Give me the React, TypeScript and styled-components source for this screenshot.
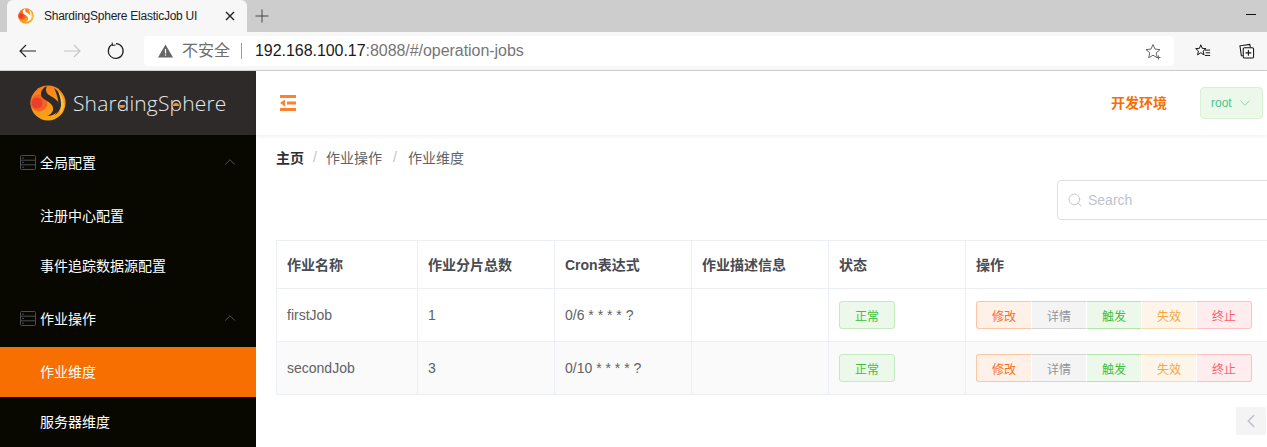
import React from "react";
import styled, { createGlobalStyle } from "styled-components";
import { ChevronDown, ChevronLeft, ChevronUp, Search } from "lucide-react";

const GlobalStyle = createGlobalStyle`
  html, body {
    margin: 0;
    padding: 0;
    height: 100%;
    overflow: hidden;
    background: #fff;
    font-family: "Liberation Sans", "Noto Sans CJK SC", sans-serif;
  }
`;

const Page = styled.div`
  width: 1267px;
  height: 447px;
  display: flex;
  flex-direction: column;
  overflow: hidden;
`;

const TabStrip = styled.div`
  height: 32px;
  background: #cdcdcd;
  display: flex;
  align-items: flex-end;
  padding-left: 7px;
  flex: none;
`;

const Tab = styled.div`
  width: 240px;
  height: 32px;
  background: #f7f7f7;
  border-radius: 6px 6px 0 0;
  display: flex;
  align-items: center;
  padding: 0 12px 0 11px;
  box-sizing: border-box;
  gap: 10px;
`;

const TabTitle = styled.span`
  flex: 1;
  font-size: 12px;
  color: #222;
  letter-spacing: -0.25px;
  white-space: nowrap;
`;

const NewTab = styled.div`
  width: 30px;
  height: 32px;
  display: flex;
  align-items: center;
  justify-content: center;
`;

const Minimize = styled.div`
  margin-left: auto;
  margin-right: 11px;
  margin-bottom: 17px;
  width: 10px;
  height: 1px;
  background: #111;
`;

const Toolbar = styled.div`
  height: 38px;
  flex: none;
  background: #f7f7f7;
  border-bottom: 1px solid #d0d0d0;
  display: flex;
  align-items: center;
  box-sizing: content-box;
`;

const NavButton = styled.div`
  width: 44px;
  height: 30px;
  display: flex;
  align-items: center;
  justify-content: center;
  flex: none;
`;

const NavGroup = styled.div`
  display: flex;
  width: 144px;
  padding-left: 6px;
  box-sizing: border-box;
  flex: none;
`;

const Omnibox = styled.div`
  width: 1030px;
  height: 30px;
  background: #fff;
  border-radius: 4px;
  display: flex;
  align-items: center;
  padding: 0 12px 0 14px;
  box-sizing: border-box;
  flex: none;
`;

const NotSecure = styled.span`
  color: #6e6e6e;
  font-size: 16px;
  margin-left: 9px;
  padding-right: 11px;
  border-right: 1px solid #9a9a9a;
  line-height: 16px;
`;

const Url = styled.span`
  margin-left: 13px;
  font-size: 16px;
  color: #767676;
  flex: 1;
  letter-spacing: -0.05px;
`;

const UrlHost = styled.span`
  color: #1a1a1a;
`;

const ToolbarIcons = styled.div`
  display: flex;
  margin-left: 7px;
`;

const ToolbarIcon = styled.div`
  width: 44px;
  height: 30px;
  display: flex;
  align-items: center;
  justify-content: center;
`;

const AppShell = styled.div`
  flex: 1;
  min-height: 0;
  display: flex;
`;

const Sidebar = styled.aside`
  width: 256px;
  flex: none;
  background: #080800;
  display: flex;
  flex-direction: column;
`;

const LogoBar = styled.div`
  height: 64px;
  flex: none;
  background: #2d2a29;
  display: flex;
  align-items: center;
  padding-left: 30px;
  gap: 7px;
`;

const LogoText = styled.span`
  position: relative;
  color: #e9e9e9;
  font-family: "Open Sans", sans-serif;
  font-size: 21px;
  font-weight: 300;
  letter-spacing: 0.15px;
`;

// the small orange fill inside the bowls of the wordmark's d and p
const LogoDot = styled.i<{ $left: number; $top: number; $flip?: boolean }>`
  position: absolute;
  left: ${({ $left }) => $left}px;
  top: ${({ $top }) => $top}px;
  width: 6px;
  height: 3px;
  background: #f7931e;
  border-radius: ${({ $flip }) => ($flip ? "3px 3px 0 0" : "0 0 3px 3px")};
`;

const MenuGroup = styled.div`
  height: 56px;
  display: flex;
  align-items: center;
  padding: 0 17px 2px 20px;
  box-sizing: border-box;
  color: #fff;
  font-size: 14px;
  flex: none;
  gap: 4px;
`;

const MenuGroupLabel = styled.span`
  flex: 1;
`;

const MenuItem = styled.div<{ $active?: boolean }>`
  height: 50px;
  display: flex;
  align-items: center;
  padding: 0 0 2px 40px;
  box-sizing: border-box;
  color: #fff;
  font-size: 14px;
  flex: none;
  background: ${({ $active }) => ($active ? "#f76f00" : "transparent")};
`;

const Main = styled.main`
  flex: 1;
  min-width: 0;
  display: flex;
  flex-direction: column;
`;

const Header = styled.header`
  height: 64px;
  flex: none;
  display: flex;
  align-items: center;
  padding-left: 24px;
  box-shadow: 0 1px 4px rgba(0, 21, 41, 0.08);
`;

const EnvLabel = styled.span`
  margin-left: auto;
  margin-bottom: 2px;
  color: #f76f00;
  font-size: 14px;
  font-weight: 700;
`;

const UserSelect = styled.div`
  margin: 0 4px 0 33px;
  width: 63px;
  height: 32px;
  box-sizing: border-box;
  background: #ecf8ea;
  border: 1px solid #d9f2d4;
  border-radius: 4px;
  display: flex;
  align-items: center;
  justify-content: space-between;
  padding: 0 8px 0 10px;
  color: #4cc38a;
  font-size: 12px;
`;

const Content = styled.div`
  flex: 1;
  min-height: 0;
  padding: 0 0 0 20px;
  display: flex;
  flex-direction: column;
`;

const Breadcrumb = styled.nav`
  display: flex;
  align-items: center;
  height: 45px;
  padding-bottom: 1px;
  box-sizing: border-box;
  flex: none;
  font-size: 14px;
  color: #606266;
`;

const Crumb = styled.span<{ $strong?: boolean }>`
  font-weight: ${({ $strong }) => ($strong ? 700 : 400)};
  color: ${({ $strong }) => ($strong ? "#303133" : "#606266")};
`;

const CrumbSep = styled.span<{ $wide?: boolean }>`
  color: #c0c4cc;
  margin: 0 ${({ $wide }) => ($wide ? "11px" : "9px")};
  width: 4px;
  text-align: center;
`;

const SearchRow = styled.div`
  height: 60px;
  flex: none;
  display: flex;
  justify-content: flex-end;
  align-items: flex-start;
`;

const SearchBox = styled.div`
  width: 230px;
  margin-right: -20px;
  height: 40px;
  box-sizing: border-box;
  border: 1px solid #dcdfe6;
  border-radius: 4px;
  display: flex;
  align-items: center;
  padding-left: 9px;
  gap: 5px;
  color: #c0c4cc;
  font-size: 14px;
  flex: none;
`;

const JobTable = styled.div`
  width: 991px;
  display: grid;
  grid-template-columns: 141px 137px 137px 137px 137px 302px;
  border-top: 1px solid #ebeef5;
  border-left: 1px solid #ebeef5;
  box-sizing: border-box;
`;

const Cell = styled.div<{ $head?: boolean; $striped?: boolean }>`
  height: ${({ $head }) => ($head ? "48px" : "53px")};
  box-sizing: border-box;
  border-right: 1px solid #ebeef5;
  border-bottom: 1px solid #ebeef5;
  padding: 0 0 ${({ $head }) => ($head ? "2px" : "0")} 10px;
  display: flex;
  align-items: center;
  font-size: 14px;
  font-weight: ${({ $head }) => ($head ? 700 : 400)};
  color: ${({ $head }) => ($head ? "#484b52" : "#606266")};
  background: ${({ $striped }) => ($striped ? "#fafafa" : "#fff")};
`;

const StatusTag = styled.div`
  width: 56px;
  height: 28px;
  box-sizing: border-box;
  background: #ecf8ea;
  border: 1px solid #c4ebbd;
  border-radius: 3px;
  display: flex;
  align-items: center;
  justify-content: center;
  color: #3cc13b;
  font-size: 12px;
`;

const ButtonGroup = styled.div`
  display: flex;
`;

const tones = {
  orange: { bg: "#fff0e8", border: "#fcc5a4", color: "#f76f1c" },
  grey: { bg: "#f4f4f5", border: "#d3d4d6", color: "#909399" },
  green: { bg: "#ecf8ea", border: "#b4e6ab", color: "#3cc13b" },
  amber: { bg: "#fef5ea", border: "#fbd9ad", color: "#f5a63c" },
  red: { bg: "#ffecee", border: "#ffc0c5", color: "#f9636e" },
};

type Tone = keyof typeof tones;

const ActionButton = styled.div<{ $tone: Tone }>`
  width: 55px;
  height: 28px;
  box-sizing: border-box;
  display: flex;
  align-items: center;
  justify-content: center;
  font-size: 12px;
  background: ${({ $tone }) => tones[$tone].bg};
  color: ${({ $tone }) => tones[$tone].color};
  border: 1px solid ${({ $tone }) => tones[$tone].border};
  border-left-color: #fff;
  border-right-width: 0;
  &:first-child {
    border-left-color: ${({ $tone }) => tones[$tone].border};
    border-radius: 3px 0 0 3px;
  }
  &:last-child {
    width: 56px;
    border-right-width: 1px;
    border-radius: 0 3px 3px 0;
  }
`;

const PagerRow = styled.div`
  display: flex;
  justify-content: flex-end;
  margin-top: 12px;
  padding-right: 1px;
`;

const PagerButton = styled.div`
  width: 30px;
  height: 28px;
  background: #f4f4f5;
  border-radius: 2px;
  display: flex;
  align-items: center;
  justify-content: center;
  color: #c0c4cc;
`;

const SphereLogo = ({ size, id, swirl }: { size: number; id: string; swirl: string }) => (
  <svg width={size} height={size} viewBox="0 0 36 36" style={{ flex: "none" }}>
    <defs>
      <linearGradient id={id} x1="0.2" y1="0" x2="0.7" y2="1">
        <stop offset="0%" stopColor="#f47a1f" />
        <stop offset="100%" stopColor="#fbab18" />
      </linearGradient>
    </defs>
    <circle cx="18" cy="18" r="17.5" fill={`url(#${id})`} />
    <circle cx="9" cy="18" r="8.5" fill="#f6621f" />
    <circle cx="7" cy="18" r="5.5" fill="#ea3f2e" />
    {/* swirl through the middle of the ball */}
    <path
      d="M17 1C10 4 9 11 14 14c5 3 10 6 9 11-.6 3-3 5-6 6 6 0 11-3 12-9 1-6-5-9-10-12-3-2-4-6-2-9z"
      fill={swirl}
    />
    <path d="M24 3c6 4 9 11 7 18-1 4-3 7-6 9 3-5 4-10 3-15-.6-4-2-8-4-12z" fill={swirl} />
    <path d="M28 6c5 5 7 12 5 18-1 3-2 4-3 5 2-8 1-16-2-23z" fill="#fcc23c" />
  </svg>
);

const ServerIcon = () => (
  <svg width="16" height="15" viewBox="0 0 16 15" fill="none" stroke="#4a4f52" strokeWidth="1" style={{ flex: "none" }}>
    <rect x="0.5" y="0.5" width="15" height="14" rx="1" />
    <path d="M0.5 5.2h15M0.5 9.8h15M2 3h2M2 7.5h2M2 12.2h2" />
  </svg>
);

const menuChevron = <ChevronUp size={18} color="#5c5c56" strokeWidth={1.2} />;

const jobs = [
  { name: "firstJob", count: 1, cron: "0/6 * * * * ?" },
  { name: "secondJob", count: 3, cron: "0/10 * * * * ?" },
];

const actions: { label: string; tone: Tone }[] = [
  { label: "修改", tone: "orange" },
  { label: "详情", tone: "grey" },
  { label: "触发", tone: "green" },
  { label: "失效", tone: "amber" },
  { label: "终止", tone: "red" },
];

const headings = ["作业名称", "作业分片总数", "Cron表达式", "作业描述信息", "状态", "操作"];

export default function App() {
  return (
    <Page>
      <GlobalStyle />
      <TabStrip>
        <Tab>
          <SphereLogo size={16} id="favicon-ball" swirl="#fff" />
          <TabTitle>ShardingSphere ElasticJob UI</TabTitle>
          <svg width="10" height="10" viewBox="0 0 10 10" stroke="#222" strokeWidth="1.4">
            <path d="M1 1l8 8M9 1l-8 8" />
          </svg>
        </Tab>
        <NewTab>
          <svg width="14" height="14" viewBox="0 0 14 14" stroke="#444" strokeWidth="1">
            <path d="M7 0.5v13M0.5 7h13" />
          </svg>
        </NewTab>
        <Minimize />
      </TabStrip>
      <Toolbar>
        <NavGroup>
          <NavButton>
            <svg width="18" height="14" viewBox="0 0 18 14" fill="none" stroke="#222" strokeWidth="1.1">
              <path d="M17 7H1M7 1L1 7l6 6" />
            </svg>
          </NavButton>
          <NavButton>
            <svg width="18" height="14" viewBox="0 0 18 14" fill="none" stroke="#c4c4c4" strokeWidth="1.1">
              <path d="M1 7h16M11 1l6 6-6 6" />
            </svg>
          </NavButton>
          <NavButton>
            <svg width="18" height="18" viewBox="0 0 18 18" fill="none" stroke="#222" strokeWidth="1.2">
              <path d="M5 2.6a7.4 7.4 0 1 0 4-1" />
              <path d="M5.5 0.5v3h3" strokeWidth="1" transform="rotate(-8 5 3)" />
            </svg>
          </NavButton>
        </NavGroup>
        <Omnibox>
          <svg width="15" height="14" viewBox="0 0 15 14" style={{ flex: "none" }}>
            <path d="M7.5 0.5L15 13.5H0z" fill="#666" />
            <path d="M6.9 5h1.2v4.6H6.9zM6.9 10.5h1.2v1.3H6.9z" fill="#fff" />
          </svg>
          <NotSecure>不安全</NotSecure>
          <Url>
            <UrlHost>192.168.100.17</UrlHost>:8088/#/operation-jobs
          </Url>
          <svg width="17" height="17" viewBox="0 0 17 17" fill="none" stroke="#666" strokeWidth="1">
            <path d="M8 1.5l2 4.6 5 .5-3.8 3.3 1.1 4.9L8 12.2l-4.3 2.6 1.1-4.9L1 6.6l5-.5z" />
            <path d="M13.5 12.5v4M11.5 14.5h4" />
          </svg>
        </Omnibox>
        <ToolbarIcons>
          <ToolbarIcon>
            <svg width="16" height="16" viewBox="0 0 18 17" fill="none" stroke="#111" strokeWidth="1.1">
              <path d="M6.5 1.5l1.6 4 4.2.3-3.2 2.8 1 4.2-3.6-2.3-3.6 2.3 1-4.2L.8 5.8 5 5.5z" />
              <path d="M11 7.5h6M12 10.5h5M11 13.5h6" />
            </svg>
          </ToolbarIcon>
          <ToolbarIcon>
            <svg width="16" height="16" viewBox="0 0 17 17" fill="none" stroke="#111" strokeWidth="1.1">
              <path d="M4 13.5H2.5L1 3l10.5-1.5.5 3" />
              <rect x="4.5" y="5" width="11" height="11" rx="1.5" />
              <path d="M10 7.5v6M7 10.5h6" />
            </svg>
          </ToolbarIcon>
        </ToolbarIcons>
      </Toolbar>
      <AppShell>
        <Sidebar>
          <LogoBar>
            <SphereLogo size={36} id="brand-ball" swirl="#2d2a29" />
            <LogoText>
              ShardingSphere
              <LogoDot $left={46} $top={16} />
              <LogoDot $left={100} $top={14} $flip />
            </LogoText>
          </LogoBar>
          <MenuGroup>
            <ServerIcon />
            <MenuGroupLabel>全局配置</MenuGroupLabel>
            {menuChevron}
          </MenuGroup>
          <MenuItem>注册中心配置</MenuItem>
          <MenuItem>事件追踪数据源配置</MenuItem>
          <MenuGroup>
            <ServerIcon />
            <MenuGroupLabel>作业操作</MenuGroupLabel>
            {menuChevron}
          </MenuGroup>
          <MenuItem $active>作业维度</MenuItem>
          <MenuItem>服务器维度</MenuItem>
        </Sidebar>
        <Main>
          <Header>
            <svg width="16" height="16" viewBox="0 0 16 16" fill="#fa8231">
              <path d="M0 0h16v3H0zM7 6.5h9v3H7zM0 13h16v3H0zM0 8l5-3.5v7z" />
            </svg>
            <EnvLabel>开发环境</EnvLabel>
            <UserSelect>
              root
              <ChevronDown size={18} color="#7fd3a6" strokeWidth={1.2} />
            </UserSelect>
          </Header>
          <Content>
            <Breadcrumb>
              <Crumb $strong>主页</Crumb>
              <CrumbSep>/</CrumbSep>
              <Crumb>作业操作</Crumb>
              <CrumbSep $wide>/</CrumbSep>
              <Crumb>作业维度</Crumb>
            </Breadcrumb>
            <SearchRow>
              <SearchBox>
                <Search size={16} color="#c0c4cc" strokeWidth={1.4} />
                Search
              </SearchBox>
            </SearchRow>
            <JobTable>
              {headings.map((h) => (
                <Cell $head key={h}>{h}</Cell>
              ))}
              {jobs.map((job, i) => (
                <React.Fragment key={job.name}>
                  <Cell $striped={i === 1}>{job.name}</Cell>
                  <Cell $striped={i === 1}>{job.count}</Cell>
                  <Cell $striped={i === 1}>{job.cron}</Cell>
                  <Cell $striped={i === 1} />
                  <Cell $striped={i === 1}>
                    <StatusTag>正常</StatusTag>
                  </Cell>
                  <Cell $striped={i === 1}>
                    <ButtonGroup>
                      {actions.map((a) => (
                        <ActionButton $tone={a.tone} key={a.label}>{a.label}</ActionButton>
                      ))}
                    </ButtonGroup>
                  </Cell>
                </React.Fragment>
              ))}
            </JobTable>
            <PagerRow>
              <PagerButton>
                <ChevronLeft size={22} strokeWidth={1.8} />
              </PagerButton>
            </PagerRow>
          </Content>
        </Main>
      </AppShell>
    </Page>
  );
}
